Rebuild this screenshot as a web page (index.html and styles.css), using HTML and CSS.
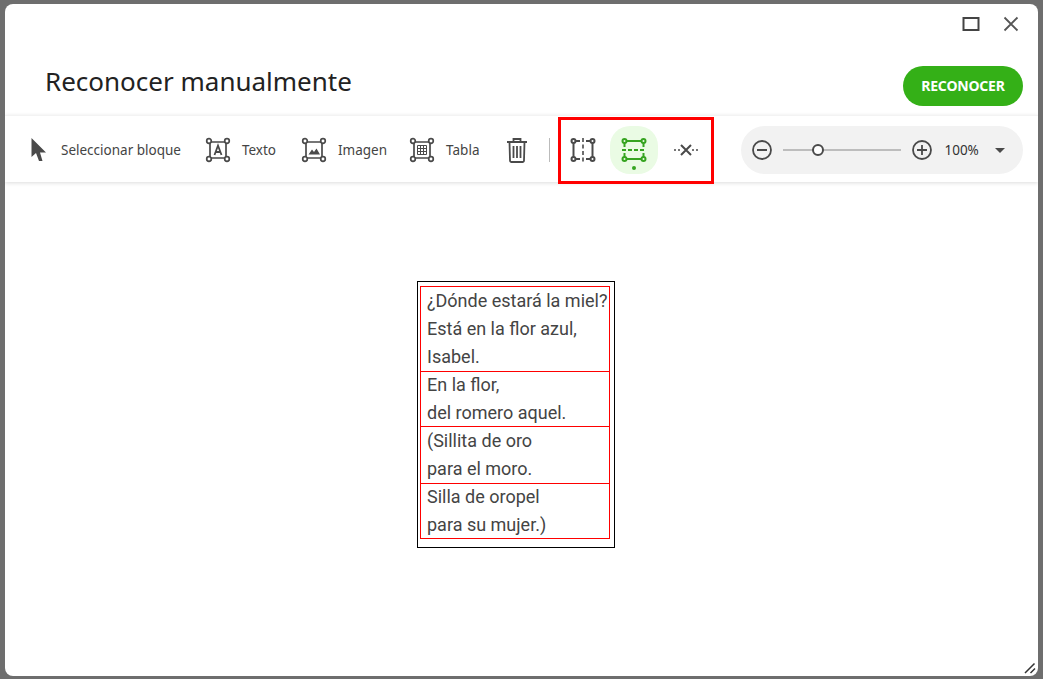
FILE: index.html
```html
<!DOCTYPE html>
<html lang="es">
<head>
<meta charset="utf-8">
<title>Reconocer manualmente</title>
<link rel="stylesheet" href="styles.css">
</head>
<body>
<div class="window">
  <div class="win-controls">
    <svg class="win-icon" width="20" height="20" viewBox="0 0 20 20"><rect x="2.500" y="4" width="15" height="12" fill="none" stroke="#444" stroke-width="2"/></svg>
    <svg class="win-icon" width="20" height="20" viewBox="0 0 20 20"><path d="M3.500 3.500 16.500 16.500M16.500 3.500 3.500 16.500" fill="none" stroke="#555" stroke-width="1.800"/></svg>
  </div>
  <header class="title-row">
    <h1 class="title">Reconocer manualmente</h1>
    <button class="primary">RECONOCER</button>
  </header>
  <div class="toolbar">
    <div class="tool tool-select">
      <svg width="24" height="28" viewBox="0 0 24 28"><path d="M5.500 2 5.500 21 10 17 13 25 16.500 25 14 16.500 20 16.500Z" fill="#4a4a4a"/></svg>
      <span>Seleccionar bloque</span>
    </div>
    <div class="tool tool-text">
      <svg width="26" height="26" viewBox="0 0 26 26"><g fill="none" stroke="#4a4a4a" stroke-width="1.700"><path d="M5 5H21V21H5Z"/><circle class="node" cx="4" cy="4" r="2.300"/><circle class="node" cx="22" cy="4" r="2.300"/><circle class="node" cx="4" cy="22" r="2.300"/><circle class="node" cx="22" cy="22" r="2.300"/><path d="M9.500 18 13 8.500 16.500 18M10.700 15H15.300" stroke-width="1.800"/></g></svg>
      <span>Texto</span>
    </div>
    <div class="tool tool-image">
      <svg width="26" height="26" viewBox="0 0 26 26"><g fill="none" stroke="#4a4a4a" stroke-width="1.700"><path d="M5 5H21V21H5Z"/><circle class="node" cx="4" cy="4" r="2.300"/><circle class="node" cx="22" cy="4" r="2.300"/><circle class="node" cx="4" cy="22" r="2.300"/><circle class="node" cx="22" cy="22" r="2.300"/></g><path d="M7.500 17.500 11 12.500 13 15 15.500 11.500 19 17.500Z" fill="#4a4a4a"/></svg>
      <span>Imagen</span>
    </div>
    <div class="tool tool-table">
      <svg width="26" height="26" viewBox="0 0 26 26"><g fill="none" stroke="#4a4a4a" stroke-width="1.700"><path d="M5 5H21V21H5Z"/><circle class="node" cx="4" cy="4" r="2.300"/><circle class="node" cx="22" cy="4" r="2.300"/><circle class="node" cx="4" cy="22" r="2.300"/><circle class="node" cx="22" cy="22" r="2.300"/><path d="M8.500 8.500H17.500V17.500H8.500ZM11.500 8.500V17.500M14.500 8.500V17.500M8.500 11.500H17.500M8.500 14.500H17.500" stroke-width="1"/></g></svg>
      <span>Tabla</span>
    </div>
    <svg class="trash" width="24" height="26" viewBox="0 0 24 26"><g fill="none" stroke="#4a4a4a" stroke-width="1.800"><path d="M2 5H22M8.500 5V2H15.500V5M4.500 5 5 23.500A1.500 1.500 0 0 0 6.500 25H17.500A1.500 1.500 0 0 0 19 23.500L19.500 5M8.500 9V21M12 9V21M15.500 9V21"/></g></svg>
    <div class="separator"></div>
    <div class="highlight">
      <div class="mode mode-first">
        <svg width="26" height="26" viewBox="0 0 26 26"><g fill="none" stroke="#4a4a4a" stroke-width="2"><path d="M3.500 6V20M22.500 6V20M6 4H10M16 4H20M6 22H10M16 22H20"/><path d="M13 1V25" stroke-dasharray="4 2.500" stroke-width="1.600"/><circle cx="3.500" cy="4" r="2"/><circle cx="22.500" cy="4" r="2"/><circle cx="3.500" cy="22" r="2"/><circle cx="22.500" cy="22" r="2"/></g></svg>
      </div>
      <div class="mode mode-active">
        <svg width="26" height="26" viewBox="0 0 26 26"><g fill="none" stroke="#36a420" stroke-width="2"><path d="M5.500 4H20.500M5.500 22H20.500M3.500 6V10M22.500 6V10M3.500 16V20M22.500 16V20"/><path d="M1 13H25" stroke-dasharray="4 2"/><circle cx="3.500" cy="4" r="2"/><circle cx="22.500" cy="4" r="2"/><circle cx="3.500" cy="22" r="2"/><circle cx="22.500" cy="22" r="2"/></g></svg>
        <span class="dot"></span>
      </div>
      <div class="mode">
        <svg width="26" height="26" viewBox="0 0 26 26"><g fill="none" stroke="#4a4a4a"><path d="M8 8 18 18M18 8 8 18" stroke-width="2"/><path d="M1 13H7M19 13H25" stroke-width="1.600" stroke-dasharray="2 2"/></g></svg>
      </div>
    </div>
    <div class="zoom-bar">
      <svg width="24" height="24" viewBox="0 0 24 24"><g fill="none" stroke="#4a4a4a" stroke-width="1.800"><circle cx="12" cy="12" r="9"/><path d="M7 12H17"/></g></svg>
      <div class="slider"><span class="knob"></span></div>
      <svg width="24" height="24" viewBox="0 0 24 24"><g fill="none" stroke="#4a4a4a" stroke-width="1.800"><circle cx="12" cy="12" r="9"/><path d="M7 12H17M12 7V17"/></g></svg>
      <span class="zoom-value">100%</span>
      <span class="caret"></span>
    </div>
  </div>
  <main class="canvas">
    <div class="page">
      <div class="blocks">
        <div class="block block-a"><p class="lines">¿Dónde estará la miel?<br>Está en la flor azul,<br>Isabel.</p></div>
        <div class="block block-b"><p class="lines lines-up">En la flor,<br>del romero aquel.</p></div>
        <div class="block block-c"><p class="lines">(Sillita de oro<br>para el moro.</p></div>
        <div class="block block-b"><p class="lines lines-up">Silla de oropel<br>para su mujer.)</p></div>
      </div>
    </div>
    <svg class="grip" width="12" height="12" viewBox="0 0 12 12"><path d="M1 11 10.500 1.500M6.500 11 11 6.500" stroke="#333" stroke-width="1.500" fill="none"/></svg>
  </main>
</div>
</body>
</html>
```
FILE: styles.css
```css
* { box-sizing: border-box; }
html, body { height: 100%; }
body {
  margin: 0;
  padding: 4px 5px 3px 5px;
  background: #6e6e6e;
  overflow: hidden;
  font-family: "Noto Sans", "Open Sans", sans-serif;
  color: #444;
}
.window {
  height: 100%;
  background: #fff;
  border-radius: 8px;
  display: flex;
  flex-direction: column;
  overflow: hidden;
}
.win-controls {
  height: 40px;
  padding: 10px 17px 0 0;
  display: flex;
  justify-content: flex-end;
  gap: 20px;
  flex: none;
}
.title-row {
  height: 71px;
  flex: none;
  display: flex;
  justify-content: space-between;
  padding: 22px 15px 0 40px;
  align-items: flex-start;
}
.title {
  margin: 0;
  font-size: 26px;
  line-height: 30px;
  font-weight: 400;
  color: #222;
}
.primary {
  width: 120px;
  height: 40px;
  padding: 0 0 2px;
  border: 0;
  border-radius: 20px;
  background: #34b017;
  color: #fff;
  font: 700 14px "Noto Sans", sans-serif;
  letter-spacing: -0.2px;
}
.toolbar {
  height: 67px;
  flex: none;
  display: flex;
  align-items: center;
  border-top: 1px solid #f3f3f3;
  box-shadow: 0 1px 4px rgba(0, 0, 0, 0.14);
  padding: 2px 0 0 21px;
}
.tool {
  display: flex;
  align-items: center;
  gap: 11px;
  font-size: 13.5px;
  color: #444;
  white-space: nowrap;
}
.node { fill: #fff; }
.tool-text { margin-left: 24px; }
.tool-image { margin-left: 25px; }
.tool-table { margin-left: 22px; }
.trash { margin-left: 26px; }
.separator {
  width: 1px;
  height: 24px;
  background: #bbb;
  margin-left: 20px;
}
.highlight {
  width: 156px;
  height: 67px;
  flex: none;
  margin-left: 8px;
  margin-top: 1px;
  padding-bottom: 1px;
  border: 3px solid #f00;
  display: flex;
  align-items: center;
  gap: 4px;
}
.mode {
  width: 48px;
  height: 48px;
  flex: none;
  border-radius: 20px;
  position: relative;
  display: flex;
  align-items: center;
  justify-content: center;
}
.mode-first {
  width: 45px;
  padding-right: 2px;
}
.mode-active { background: #eafbe4; }
.dot {
  position: absolute;
  left: 22px;
  bottom: 4px;
  width: 4px;
  height: 4px;
  border-radius: 50%;
  background: #36a420;
}
.zoom-bar {
  width: 282px;
  height: 48px;
  flex: none;
  margin-left: 27px;
  border-radius: 24px;
  background: #f2f2f2;
  display: flex;
  align-items: center;
  padding-left: 9px;
}
.slider {
  width: 118px;
  height: 2px;
  background: #bdbdbd;
  margin: 0 9px;
  position: relative;
}
.knob {
  position: absolute;
  left: 29px;
  top: -5px;
  width: 12px;
  height: 12px;
  border-radius: 50%;
  background: #fff;
  border: 2px solid #4a4a4a;
}
.zoom-value {
  margin-left: 10px;
  font-size: 13.5px;
  color: #333;
}
.caret {
  margin-left: 16px;
  width: 0;
  height: 0;
  border: 5.5px solid transparent;
  border-top: 5.5px solid #4a4a4a;
  border-bottom: 0;
}
.canvas {
  flex: 1;
  position: relative;
  padding: 99px 0 0 412px;
}
.page {
  width: 198px;
  height: 267px;
  border: 1px solid #000;
  padding: 4px 4px 0 2px;
}
.blocks {
  border: 1px solid #f00;
  border-bottom: 0;
  font: 18px/28px Roboto, sans-serif;
  color: #444;
  width: 190px;
}
.block {
  padding-left: 6px;
  border-bottom: 1px solid #f00;
  white-space: nowrap;
}
.block-a { height: 85px; }
.block-b { height: 56px; }
.block-c { height: 57px; }
.lines { margin: 0; }
.lines-up { margin-top: -1px; }
.grip {
  position: absolute;
  right: 2px;
  bottom: 2px;
}
```
